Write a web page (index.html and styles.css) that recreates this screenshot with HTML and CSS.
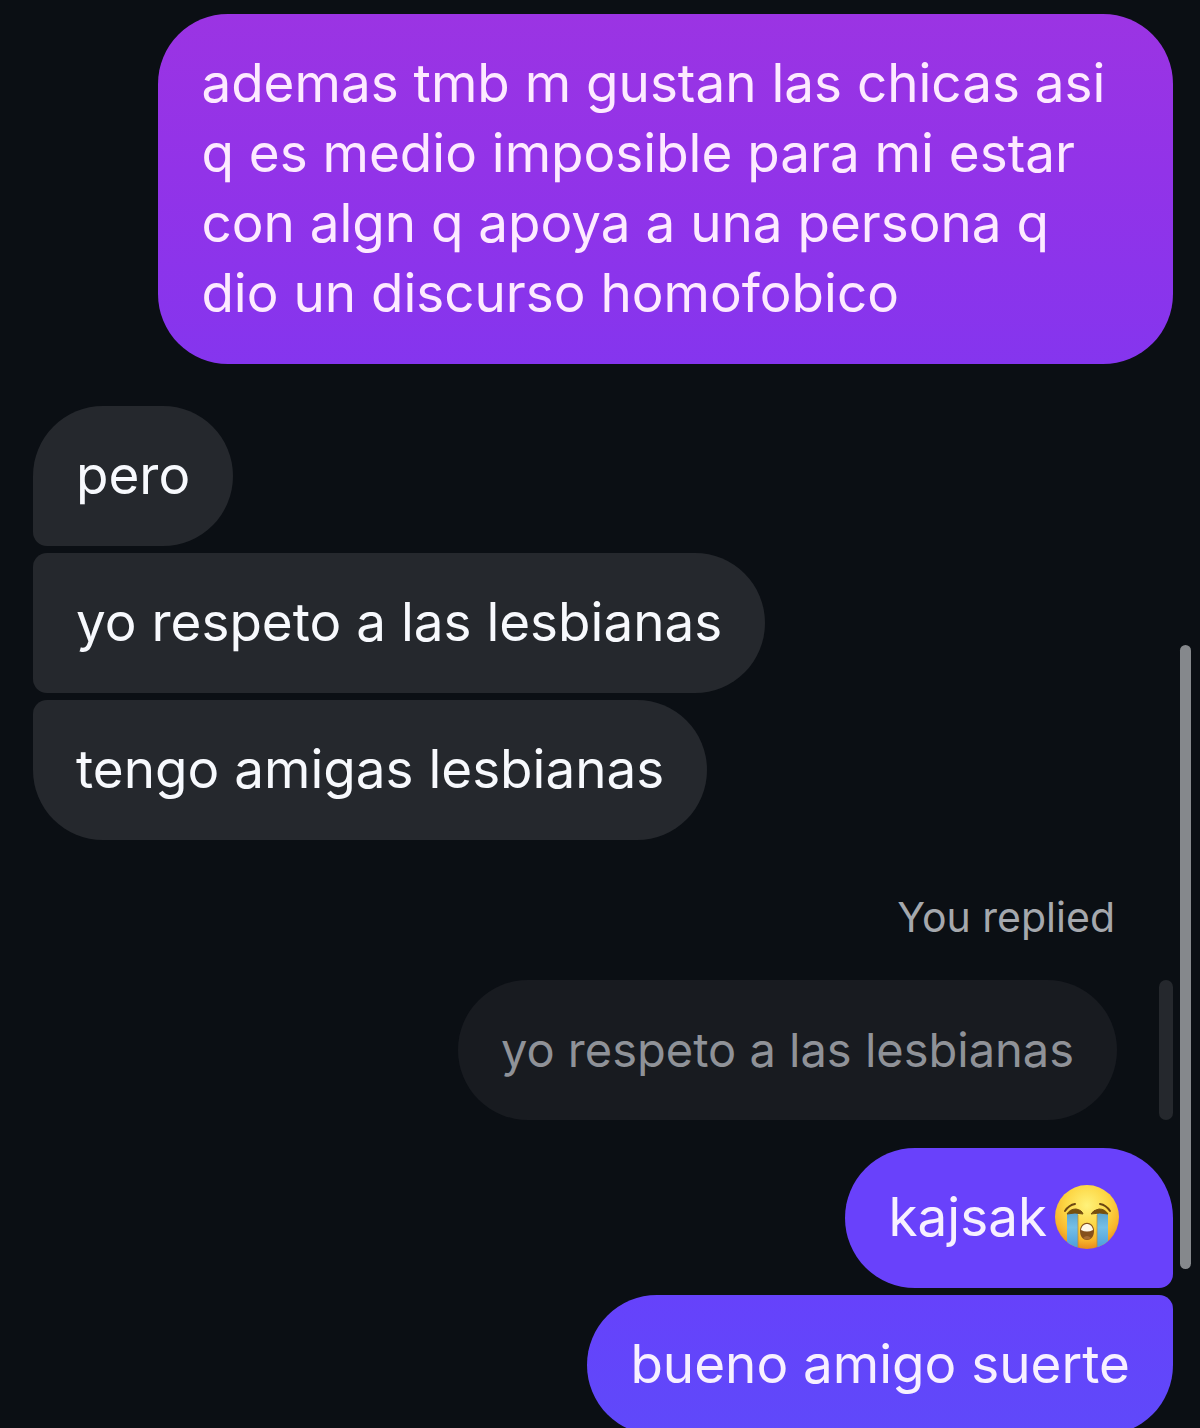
FILE: index.html
```html
<!DOCTYPE html>
<html lang="es">
<head>
<meta charset="utf-8">
<meta name="viewport" content="width=device-width, initial-scale=1">
<title>Chat</title>
<link rel="stylesheet" href="styles.css">
</head>
<body>
<main class="chat">
  <section class="group sent">
    <p class="bubble bubble-long">ademas tmb m gustan las chicas asi<br>q es medio imposible para mi estar<br>con algn q apoya a una persona q<br>dio un discurso homofobico</p>
  </section>

  <section class="group received">
    <p class="bubble">pero</p>
    <p class="bubble">yo respeto a las lesbianas</p>
    <p class="bubble">tengo amigas lesbianas</p>
  </section>

  <section class="reply">
    <p class="reply-label">You replied</p>
    <blockquote class="quote">
      <p class="quote-text">yo respeto a las lesbianas</p>
    </blockquote>
  </section>

  <section class="group sent sent-blue">
    <p class="bubble bubble-kajsak">kajsak<svg class="emoji" viewBox="0 0 64 64" role="img" aria-label="loudly crying face">
      <defs>
        <radialGradient id="face" cx="50%" cy="32%" r="68%">
          <stop offset="0" stop-color="#fff27a"/>
          <stop offset="0.5" stop-color="#fdd644"/>
          <stop offset="0.8" stop-color="#f8b52c"/>
          <stop offset="1" stop-color="#e88a1d"/>
        </radialGradient>
        <linearGradient id="tear" x1="0" y1="0" x2="0" y2="1">
          <stop offset="0" stop-color="#5da5cf"/>
          <stop offset="0.4" stop-color="#74bfe6"/>
          <stop offset="1" stop-color="#4a9bdc"/>
        </linearGradient>
        <clipPath id="round"><circle cx="32" cy="32" r="32"/></clipPath>
      </defs>
      <circle cx="32" cy="32" r="32" fill="url(#face)"/>
      <g clip-path="url(#round)">
        <path d="M12 28h11v36H12z" fill="url(#tear)"/>
        <path d="M42 28h11v36H42z" fill="url(#tear)"/>
        <path d="M23 30v32M42 30v32" stroke="#b98a32" stroke-width="1" opacity=".7"/>
      </g>
      <path d="M10 26Q14 20 20 19M45 19Q51 20 55 26" fill="none" stroke="#6b4612" stroke-width="2" stroke-linecap="round"/>
      <path d="M12 29Q15 24 21 24Q27 25 28 29Q20 27 12 29ZM36 29Q38 25 44 24Q50 24 53 29Q45 27 36 29Z" fill="#76500f" stroke="#76500f" stroke-linejoin="round"/>
      <path d="M25 46C25 35 39 35 39 46C39 58 25 58 25 46Z" fill="#85501c"/>
      <path d="M26 45C27 37 37 37 38 45Q32 48 26 45Z" fill="#fff8e8"/>
      <path d="M28 53Q32 49 36 53Q32 56 28 53Z" fill="#a56a34"/>
    </svg></p>
    <p class="bubble bubble-bueno">bueno amigo suerte</p>
  </section>
  <div class="scroll-thumb" aria-hidden="true"></div>
</main>
</body>
</html>
```
FILE: styles.css
```css
* {
  box-sizing: border-box;
}

body {
  margin: 0;
  background: #0b0f14;
  color: #f7f9fd;
  font-family: Inter, "Liberation Sans", sans-serif;
}

p,
blockquote {
  margin: 0;
}

.chat {
  position: relative;
  display: flex;
  flex-direction: column;
  height: 100vh;
  overflow: hidden;
  padding: 14px 27px 0 33px;
}

.group {
  display: flex;
  flex-direction: column;
  flex-shrink: 0;
  gap: 7px;
}

.received {
  align-items: flex-start;
  margin-top: 42px;
}

.sent {
  align-items: flex-end;
  color: #fdeaff;
}

.sent-blue {
  margin-top: 28px;
  color: #f7f0ff;
}

.bubble {
  padding: 34px 43px 36px;
  border-radius: 70px;
  background: #25282d;
  font-size: 53px;
  line-height: 70px;
}

.bubble-long {
  width: 89%;
  background: linear-gradient(#9b34e3, #9233e8 45%, #8535ee);
}

.received .bubble:not(:last-child) {
  border-bottom-left-radius: 14px;
}

.received .bubble:not(:first-child) {
  border-top-left-radius: 14px;
}

.bubble-kajsak {
  display: flex;
  align-items: center;
  gap: 8px;
  padding-right: 54px;
  border-bottom-right-radius: 14px;
  background: #6941fb;
}

.bubble-bueno {
  border-top-right-radius: 14px;
  background: linear-gradient(#6642fb, #5f49fa);
}

.emoji {
  width: 64px;
  height: 64px;
}

.reply {
  display: flex;
  flex-direction: column;
  flex-shrink: 0;
  align-items: flex-end;
  gap: 35px;
  margin-top: 49px;
}

.reply-label {
  padding-right: 58px;
  color: #a5a8ad;
  font-size: 41px;
  line-height: 56px;
}

.quote {
  display: flex;
  gap: 42px;
}

.quote::after {
  content: "";
  width: 14px;
  border-radius: 7px;
  background: #25282d;
}

.quote-text {
  padding: 35px 43px;
  border-radius: 70px;
  background: #181b20;
  color: #8f9298;
  font-size: 47px;
  line-height: 70px;
}

.scroll-thumb {
  position: absolute;
  top: 45.2%;
  right: 9px;
  width: 11px;
  height: 43.7%;
  border-radius: 6px;
  background: #85888c;
}
```
